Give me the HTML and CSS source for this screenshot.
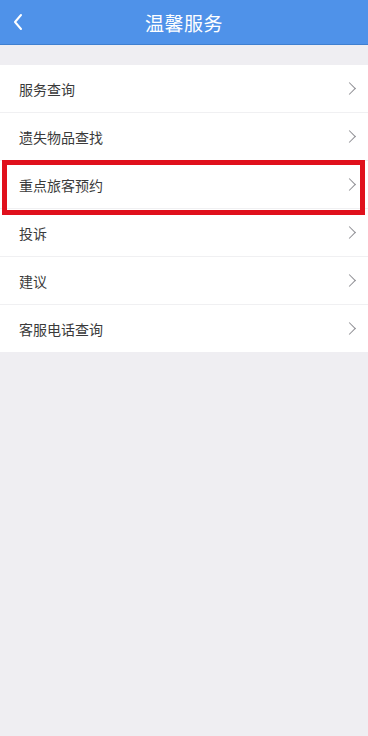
FILE: index.html
```html
<!DOCTYPE html>
<html lang="zh-CN">
<head>
  <meta charset="UTF-8" />
  <meta name="viewport" content="width=device-width, initial-scale=1.0"/>
  <title>温馨服务</title>
  <link rel="stylesheet" href="styles.css">
</head>
<body>

  <div class="header">
    <div class="back">
      <svg width="12" height="18" viewBox="0 0 12 18"><path d="M9 2 L3 9 L9 16" fill="none" stroke="#fff" stroke-width="2" stroke-linecap="round" stroke-linejoin="round"/></svg>
    </div>
    <div class="title">温馨服务</div>
  </div>

  <div class="list">
    <div class="item"><span>服务查询</span><i class="arrow"></i></div>
    <div class="item"><span>遗失物品查找</span><i class="arrow"></i></div>
    <div class="item marked"><span>重点旅客预约</span><i class="arrow"></i></div>
    <div class="item"><span>投诉</span><i class="arrow"></i></div>
    <div class="item"><span>建议</span><i class="arrow"></i></div>
    <div class="item"><span>客服电话查询</span><i class="arrow"></i></div>
  </div>

</body>
</html>
```

FILE: styles.css
```css
body {
  margin: 0;
  font-family: "Noto Sans CJK SC", "Noto Sans", sans-serif;
  background: #efeef2;
  height: 736px;
  overflow: hidden;
}
.header {
  background-color: #4f92e9;
  color: white;
  height: 44px;
  display: flex;
  align-items: center;
  justify-content: center;
  position: relative;
  border-bottom: 1px solid #3f7fd0;
}
.back {
  position: absolute;
  left: 12px;
  top: 13px;
  display: flex;
}
.title {
  font-size: 19px;
  letter-spacing: 0.5px;
}
.list {
  margin-top: 20px;
  background: white;
}
.item {
  height: 47px;
  padding: 0 10px 0 19px;
  display: flex;
  align-items: center;
  justify-content: space-between;
  font-size: 14px;
  color: #3a3a3a;
  border-bottom: 1px solid #f0f0f2;
  position: relative;
}
.item:last-child {
  border-bottom: none;
}
.arrow {
  width: 8px;
  height: 8px;
  border-top: 1.5px solid #8e8e93;
  border-right: 1.5px solid #8e8e93;
  transform: rotate(45deg);
  margin-right: 4px;
}
.marked::after {
  content: "";
  position: absolute;
  left: 2px;
  right: 3px;
  top: -1px;
  bottom: -7px;
  border: 5px solid #e0101c;
}
```
